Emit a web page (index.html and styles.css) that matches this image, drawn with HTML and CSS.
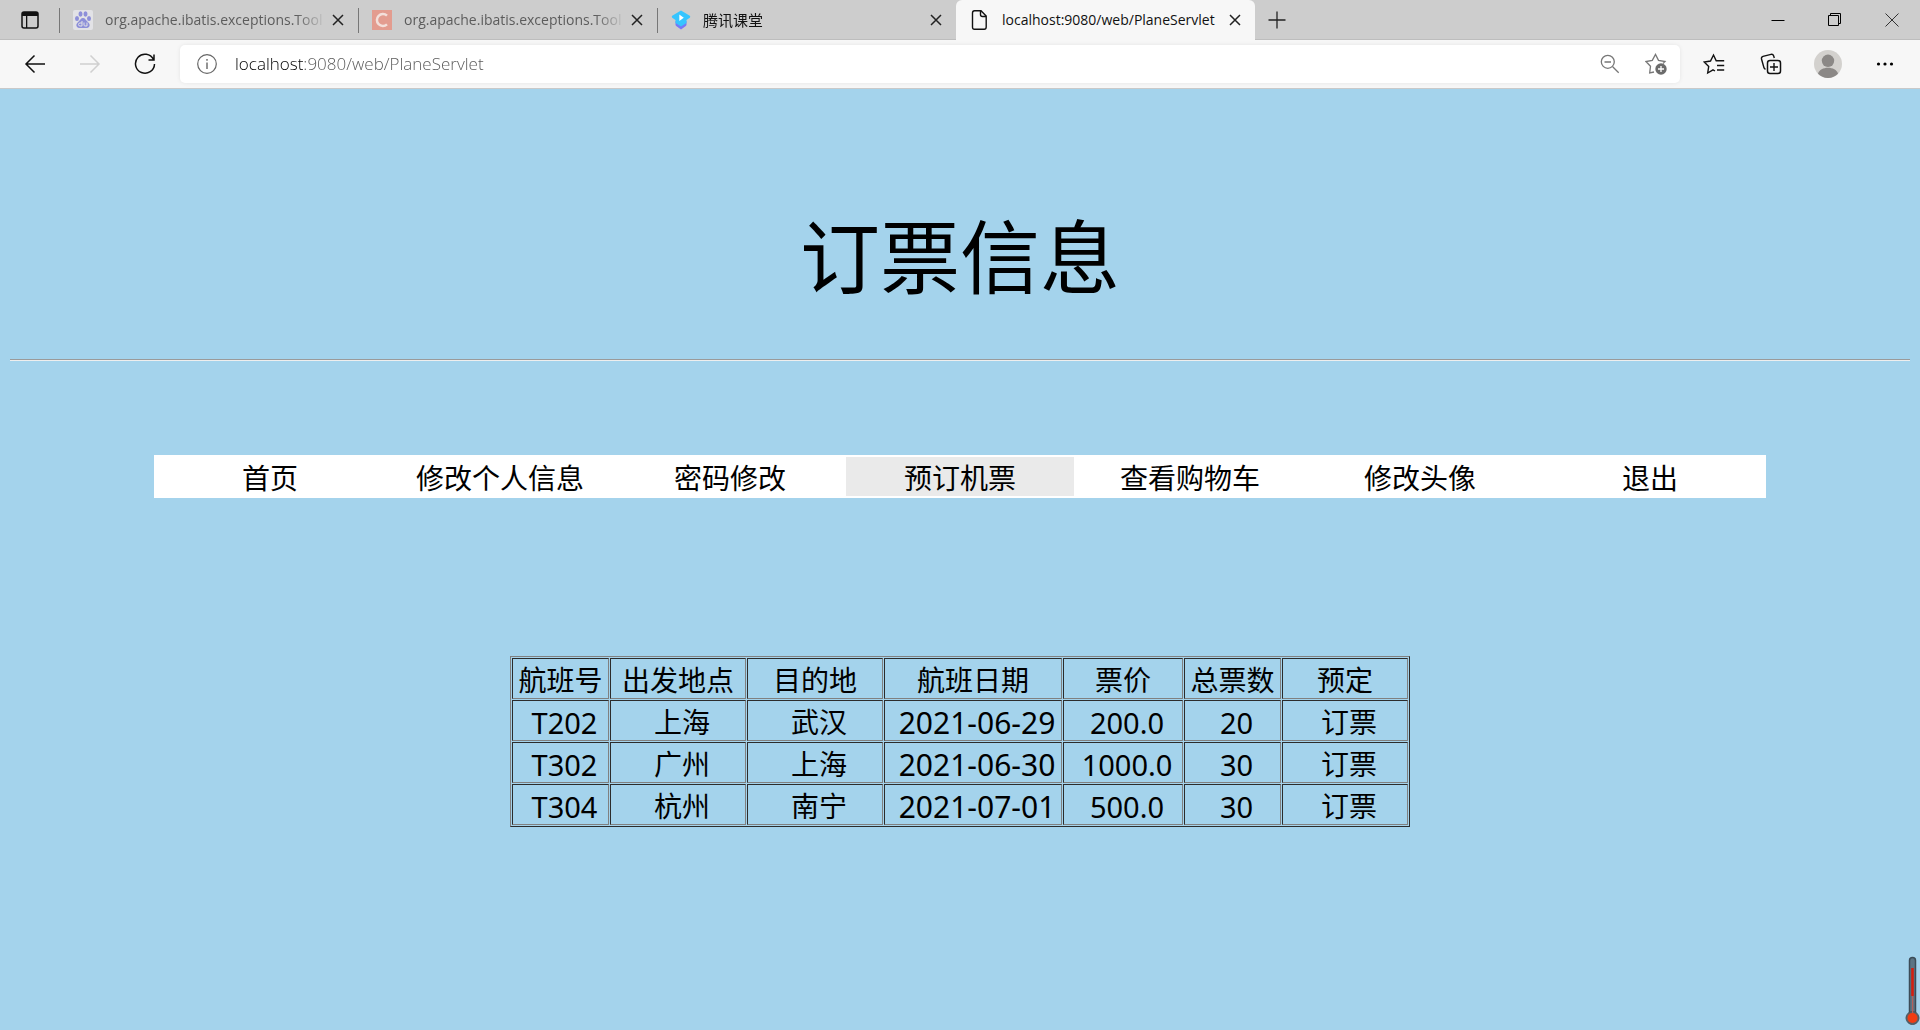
FILE: index.html
```html
<!DOCTYPE html>
<html lang="zh-CN">
<head>
    <meta charset="UTF-8">
    <meta name="viewport" content="width=device-width, initial-scale=1.0">
    <title>订票信息</title>
    <link rel="stylesheet" href="styles.css">
</head>
<body>
    <header class="browser">
        <div class="tab-bar">
            <button class="tab-menu" aria-label="标签页操作">
                <svg width="18" height="18" viewBox="0 0 18 18"><rect x="1" y="1" width="16" height="16" rx="2" fill="none" stroke="#111" stroke-width="1.5"/><path d="M1 1h16v4H1zM5 5h1.300v12H5z" fill="#111"/></svg>
            </button>
            <div class="tab">
                <svg width="20" height="20" viewBox="0 0 20 20"><rect width="20" height="20" rx="2" fill="#e2e2e6"/><g fill="#8d8fd9"><ellipse cx="4" cy="8.500" rx="2" ry="2.600"/><ellipse cx="7.500" cy="4" rx="2" ry="2.700"/><ellipse cx="12.500" cy="4" rx="2" ry="2.700"/><ellipse cx="16" cy="8.500" rx="2" ry="2.600"/><path d="M10 8c2.200 0 2.600 2 4.300 3.600 2 1.700 3 3.300 2 5-1.200 2-3.500 1.400-6.300 1.400s-5.100.6-6.300-1.400c-1-1.700 0-3.300 2-5C7.400 10 7.800 8 10 8z"/></g><path d="M9 11v5H7a1.500 1.500 0 0 1 0-3h2M11 12.500V15q0 1 1 1h2v-3.500" fill="none" stroke="#e2e2e6"/></svg>
                <a class="tab-title" href="#">org.apache.ibatis.exceptions.Tool</a>
                <button class="tab-close" aria-label="关闭标签页"><svg width="12" height="12" viewBox="0 0 12 12"><path d="M1 1l10 10M11 1L1 11"/></svg></button>
            </div>
            <div class="tab">
                <svg width="20" height="20" viewBox="0 0 20 20"><rect width="20" height="20" fill="#e39c8f"/><path d="M15 5.600a6 6 0 1 0 0 8.800" fill="none" stroke="#f3dfda" stroke-width="2.500"/></svg>
                <a class="tab-title" href="#">org.apache.ibatis.exceptions.Tool</a>
                <button class="tab-close" aria-label="关闭标签页"><svg width="12" height="12" viewBox="0 0 12 12"><path d="M1 1l10 10M11 1L1 11"/></svg></button>
            </div>
            <div class="tab tab-loaded">
                <svg width="20" height="20" viewBox="0 0 20 20"><path d="M4.500 11l5.500 3 5.500-3v3.500q0 1-1 1.700L10 19.500l-4.500-3.300q-1-.7-1-1.700z" fill="#7579f5"/><path d="M10 .5l8.800 5.300q1 1 0 2L15.500 10v3L10 16.500 4.500 13v-3L1.200 7.800q-1-1 0-2z" fill="#36c5ff"/><path d="M8.300 4.500v6.500l4.500-3.300z" fill="#fff"/></svg>
                <a class="tab-title" href="#">腾讯课堂</a>
                <button class="tab-close" aria-label="关闭标签页"><svg width="12" height="12" viewBox="0 0 12 12"><path d="M1 1l10 10M11 1L1 11"/></svg></button>
            </div>
            <div class="tab tab-active">
                <svg width="20" height="20" viewBox="0 0 20 20"><path d="M4.500.8H11L16.200 6v11q0 2.200-2 2.200H4.500q-2 0-2-2.200V3q0-2.200 2-2.200zM10.500 1v3.500q0 2 2 2h3.500" fill="none" stroke="#111" stroke-width="1.400"/></svg>
                <a class="tab-title" href="#">localhost:9080/web/PlaneServlet</a>
                <button class="tab-close" aria-label="关闭标签页"><svg width="12" height="12" viewBox="0 0 12 12"><path d="M1 1l10 10M11 1L1 11"/></svg></button>
            </div>
            <button class="new-tab" aria-label="新建标签页"><svg width="18" height="18" viewBox="0 0 18 18"><path d="M9 .5v17M.5 9h17" stroke="#222" stroke-width="1.300"/></svg></button>
            <div class="window-buttons">
                <button aria-label="最小化"><svg width="14" height="14" viewBox="0 0 14 14"><path d="M.5 7.500h13" stroke="#000"/></svg></button>
                <button aria-label="还原"><svg width="14" height="14" viewBox="0 0 14 14"><path d="M.5 2.500h10v10H.5zM2.500 2.500v-2h10v10h-2" fill="none" stroke="#000"/></svg></button>
                <button aria-label="关闭"><svg width="14" height="14" viewBox="0 0 14 14"><path d="M.5 .5l13 13M13.500 .5l-13 13" stroke="#333"/></svg></button>
            </div>
        </div>

        <div class="toolbar">
            <div class="nav-buttons">
                <button aria-label="后退"><svg width="22" height="20" viewBox="0 0 22 20"><path d="M21 10H2M10.500 1.500L2 10l8.500 8.500" fill="none" stroke="#111" stroke-width="1.500"/></svg></button>
                <button aria-label="前进"><svg width="22" height="20" viewBox="0 0 22 20"><path d="M1 10h19M11.500 1.500L20 10l-8.500 8.500" fill="none" stroke="#d0d0d0" stroke-width="1.500"/></svg></button>
                <button aria-label="刷新"><svg width="22" height="22" viewBox="0 0 22 22"><path d="M19.500 6.500A9.500 9.500 0 1 0 20.500 11M20 1.500v5.500h-5.500" fill="none" stroke="#111" stroke-width="1.500"/></svg></button>
            </div>
            <form class="address">
                <svg width="20" height="20" viewBox="0 0 20 20"><circle cx="10" cy="10" r="9.300" fill="none" stroke="#666" stroke-width="1.200"/><path d="M10 8.500v6.500M10 5v1.800" stroke="#666" stroke-width="1.400"/></svg>
                <input class="url" type="text" aria-label="地址栏" value="localhost:9080/web/PlaneServlet">
                <button type="button" aria-label="缩放"><svg width="20" height="20" viewBox="0 0 20 20"><path d="M12.700 12.700l6 6M4.500 8h6.500" stroke="#777" stroke-width="1.300"/><circle cx="7.800" cy="7.800" r="6.500" fill="none" stroke="#777" stroke-width="1.300"/></svg></button>
                <button type="button" aria-label="添加到收藏夹"><svg width="22" height="22" viewBox="0 0 22 22"><path d="M9 19l-4.300 1 .8-6.700L1 8.500l6.300-1.200L10.500 1.500l3 5.800L20 8.500l-2 2" fill="none" stroke="#777" stroke-width="1.300"/><circle cx="16" cy="16" r="5.700" fill="#6b6b6b"/><path d="M16 13v6M13 16h6" stroke="#fff" stroke-width="1.300"/></svg></button>
            </form>
            <div class="tools">
                <button aria-label="收藏夹"><svg width="22" height="22" viewBox="0 0 22 22"><path d="M12 18l-2-1.200L4.700 20l1-6.500L1.200 9l6.300-1L10.500 2l2.700 5.800h8M14 12.500h7.200M14 17h7.200" fill="none" stroke="#111" stroke-width="1.400"/></svg></button>
                <button aria-label="集锦"><svg width="22" height="22" viewBox="0 0 22 22"><path d="M5.500 16.300q-1.300-.6-1.600-1.800L1.500 6q-.4-2 1.500-2.600l8-2q2-.4 2.600 1.400l.7 2.200" fill="none" stroke="#111" stroke-width="1.400"/><rect x="7.500" y="7.500" width="13" height="13" rx="2.500" fill="none" stroke="#111" stroke-width="1.500"/><path d="M14 10v8M10 14h8" stroke="#111" stroke-width="1.400"/></svg></button>
                <button aria-label="个人资料"><svg width="28" height="28" viewBox="0 0 28 28"><circle cx="14" cy="14" r="14" fill="#d3d1ce"/><circle cx="14" cy="10.800" r="6.200" fill="#8b8886"/><path d="M4 23.800c2-8 18-8 20 0a14 14 0 0 1-20 0z" fill="#8b8886"/></svg></button>
                <button aria-label="设置及其他"><svg width="18" height="18" viewBox="0 0 18 18"><circle cx="2.500" cy="9" r="1.600"/><circle cx="9" cy="9" r="1.600"/><circle cx="15.500" cy="9" r="1.600"/></svg></button>
            </div>
        </div>
    </header>

    <main class="page">
        <h1>订票信息</h1>
        <hr>
        <ul class="menu">
            <li><a href="#">首页</a></li>
            <li><a href="#">修改个人信息</a></li>
            <li><a href="#">密码修改</a></li>
            <li><a href="#" class="current">预订机票</a></li>
            <li><a href="#">查看购物车</a></li>
            <li><a href="#">修改头像</a></li>
            <li><a href="#">退出</a></li>
        </ul>

        <table class="flights">
            <colgroup>
                <col class="col-small">
                <col class="col-city">
                <col class="col-city">
                <col class="col-date">
                <col class="col-price">
                <col class="col-small">
                <col class="col-order">
            </colgroup>
            <thead>
                <tr>
                    <th>航班号</th>
                    <th>出发地点</th>
                    <th>目的地</th>
                    <th>航班日期</th>
                    <th>票价</th>
                    <th>总票数</th>
                    <th>预定</th>
                </tr>
            </thead>
            <tbody>
                <tr>
                    <td class="num">T202</td>
                    <td>上海</td>
                    <td>武汉</td>
                    <td class="date">2021-06-29</td>
                    <td class="num">200.0</td>
                    <td class="num">20</td>
                    <td><a href="#">订票</a></td>
                </tr>
                <tr>
                    <td class="num">T302</td>
                    <td>广州</td>
                    <td>上海</td>
                    <td class="date">2021-06-30</td>
                    <td class="num">1000.0</td>
                    <td class="num">30</td>
                    <td><a href="#">订票</a></td>
                </tr>
                <tr>
                    <td class="num">T304</td>
                    <td>杭州</td>
                    <td>南宁</td>
                    <td class="date">2021-07-01</td>
                    <td class="num">500.0</td>
                    <td class="num">30</td>
                    <td><a href="#">订票</a></td>
                </tr>
            </tbody>
        </table>
    </main>

    <svg class="thermometer" width="16" height="72" viewBox="0 0 16 72"><rect x="5.500" y="1.500" width="6" height="60" rx="3" fill="#5c7484" stroke="#3c4c57" stroke-width="1.500"/><circle cx="8.500" cy="62" r="6.500" fill="#5c6066" stroke="#4a5258"/><path d="M7.200 12h2.600v28H7.200z" fill="#d31f10"/><path d="M8 40h1.200v18H8z" fill="#b4605c"/><circle cx="8.500" cy="62" r="5" fill="#f03c12"/></svg>
</body>
</html>
```
FILE: styles.css
```css
body {
    margin: 0;
    min-height: 100vh;
    background: #a4d3ec;
    color: #000;
    font-family: "Noto Sans", "Noto Sans CJK SC", sans-serif;
}

a {
    color: inherit;
    text-decoration: none;
}

button {
    display: flex;
    align-items: center;
    justify-content: center;
    padding: 0;
    border: none;
    background: none;
    cursor: pointer;
}

svg {
    flex: none;
    display: block;
}

/* tabs */
.tab-bar {
    display: flex;
    align-items: center;
    height: 40px;
    background: #cdcdcd;
    box-shadow: inset 0 -1px 0 #bdbdbd;
}

.tab-menu {
    width: 59px;
    height: 40px;
}

.tab {
    position: relative;
    flex: 0 1 299px;
    display: flex;
    align-items: center;
    gap: 12px;
    min-width: 0;
    height: 40px;
    box-sizing: border-box;
    padding: 0 12px 0 14px;
    font-family: "Open Sans", "Noto Sans CJK SC", sans-serif;
    font-size: 14px;
    color: #5c5c5c;
}

.tab::before {
    content: "";
    position: absolute;
    left: 0;
    top: 8px;
    width: 1px;
    height: 25px;
    background: #777;
}

.tab-title {
    flex: 1;
    min-width: 0;
    overflow: hidden;
    white-space: nowrap;
    line-height: 20px;
    mask-image: linear-gradient(to left, transparent, #000 30px);
}

.tab-close {
    width: 16px;
    height: 16px;
    margin-left: -8px;
}

.tab-close path {
    stroke: #222;
    stroke-width: 1.5;
}

.tab-loaded {
    color: #111;
    font-size: 15px;
}

.tab-active {
    background: #f7f7f7;
    color: #111;
    border-radius: 6px 6px 0 0;
}

.tab-active::before {
    display: none;
}

.tab-active .tab-title {
    mask-image: none;
}

.new-tab {
    width: 44px;
    height: 40px;
}

.window-buttons {
    display: flex;
    margin-left: auto;
}

.window-buttons button {
    width: 57px;
    height: 36px;
}

/* address row */
.toolbar {
    display: flex;
    align-items: center;
    height: 48px;
    background: #f7f7f7;
    border-bottom: 1px solid #c9c9c9;
}

.nav-buttons {
    display: flex;
    padding: 0 8px 0 7px;
}

.nav-buttons button {
    width: 55px;
    height: 40px;
}

.address {
    flex: 1;
    display: flex;
    align-items: center;
    height: 38px;
    min-width: 0;
    box-sizing: border-box;
    padding: 0 12px 0 17px;
    background: #fff;
    border-radius: 5px;
    box-shadow: 0 0 4px rgba(0,0,0,0.08);
}

.address button {
    width: 24px;
    margin-left: 22px;
}

/* the host part of the address is darker than the path */
.url {
    flex: 1;
    min-width: 0;
    height: 30px;
    margin-left: 18px;
    padding: 0 0 2px;
    box-sizing: border-box;
    border: none;
    outline: none;
    font-family: "Open Sans", sans-serif;
    font-size: 17px;
    font-weight: 300;
    color: #666;
    background: linear-gradient(to right, #000 69px, #555 69px);
    background-clip: text;
    -webkit-text-fill-color: transparent;
}

.tools {
    display: flex;
    padding: 0 7px 0 5px;
}

.tools button {
    width: 57px;
    height: 40px;
}

/* page */
.page {
    padding: 0 10px 40px;
}

h1 {
    margin: 0;
    padding: 137px 0 73px;
    font-size: 80px;
    font-weight: normal;
    line-height: 60px;
    text-align: center;
}

hr {
    margin: 0;
    border: none;
    border-top: 1px solid #9a9a9a;
    border-bottom: 1px solid #eee;
}

.menu {
    display: grid;
    grid-template-columns: repeat(7, 1fr);
    gap: 2px;
    margin: 94px 144px 0;
    padding: 2px;
    background: #fff;
    list-style: none;
    font-size: 28px;
    line-height: 35px;
    text-align: center;
}

.menu a {
    display: block;
    padding-top: 4px;
    white-space: nowrap;
}

.menu a:hover,
.menu .current {
    background: #eaeaea;
}

.flights {
    width: 900px;
    max-width: 100%;
    margin: 158px auto 0;
    table-layout: fixed;
    border: 1px solid;
    border-color: #808080 #2c2c2c #2c2c2c #808080;
    border-spacing: 1px;
    font-size: 28px;
    line-height: 35px;
    text-align: center;
}

.flights th,
.flights td {
    padding: 4px 1px 0;
    border: 1px solid;
    border-color: #2c2c2c #808080 #808080 #2c2c2c;
    font-weight: normal;
    white-space: nowrap;
}

.flights td {
    padding-left: 9px;
}

.flights .num {
    font-size: 29px;
}

.flights .date {
    font-size: 30px;
}

.col-small {
    width: 97px;
}

.col-city {
    width: 136px;
}

.col-date {
    width: 178px;
}

.col-price {
    width: 120px;
}

.col-order {
    width: 126px;
}

.thermometer {
    position: fixed;
    right: 0;
    bottom: 2px;
}
```
